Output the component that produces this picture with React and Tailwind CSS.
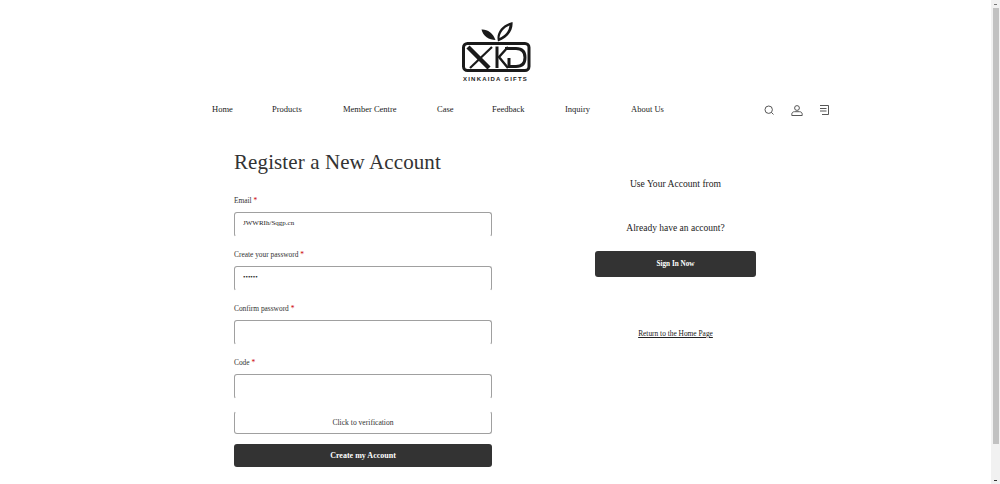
const navItems = [
  { label: 'Home', w: 'w-[20px]' },
  { label: 'Products', w: 'w-[31px]' },
  { label: 'Member Centre', w: 'w-[54px]' },
  { label: 'Case', w: 'w-[15px]' },
  { label: 'Feedback', w: 'w-[33px]' },
  { label: 'Inquiry', w: 'w-[26px]' },
  { label: 'About Us', w: 'w-[33px]' },
];

const fields = [
  { label: 'Email', value: 'JWWRIh/Sqgp.cn' },
  { label: 'Create your password', value: '••••••' },
  { label: 'Confirm password', value: '' },
  { label: 'Code', value: '' },
];

function Logo() {
  return (
    <svg width="70" height="50" viewBox="0 0 70 50" fill="none">
      {/* leaves */}
      <path d="M20.5 7.5 C26 7 32 11 34.5 18 C28 18 22 14 20.5 7.5 Z" fill="#1a1a1a" />
      <path d="M51.5 0 C52.5 8 47 16 37 19.5 C34.5 11 41 2.5 51.5 0 Z M48.5 3.5 C43 5.5 39 10.5 38.5 16 C44 13.5 48 9 48.5 3.5 Z" fill="#1a1a1a" fillRule="evenodd" />
      {/* frame */}
      <rect x="2.5" y="21.5" width="65.5" height="27" rx="4" stroke="#1a1a1a" strokeWidth="3" />
      {/* XKD mark */}
      <path d="M7 25 L28 46" stroke="#1a1a1a" strokeWidth="4.5" />
      <path d="M31 25 L9 46" stroke="#1a1a1a" strokeWidth="2.2" />
      <path d="M36 24.5 V46" stroke="#1a1a1a" strokeWidth="3" />
      <path d="M47 25 L38 35 L47 46" stroke="#1a1a1a" strokeWidth="2.4" />
      <path d="M44 26.5 H55 C61 26.5 64 30 64 35.5 C64 41 61 44.5 55 44.5 H48 V36" stroke="#1a1a1a" strokeWidth="3" />
    </svg>
  );
}

function Icons() {
  return (
    <div className="flex items-center gap-[17px] mt-[2px] text-[#444]">
      <svg width="10" height="10" viewBox="0 0 10 10" fill="none" stroke="currentColor" strokeWidth="0.9">
        <circle cx="4.7" cy="4.7" r="3.7" />
        <path d="M7.5 7.5 L9.5 9.5" />
      </svg>
      <svg width="12" height="11" viewBox="0 0 12 11" fill="none" stroke="currentColor" strokeWidth="0.9">
        <circle cx="6" cy="3" r="2.4" />
        <path d="M0.8 10.5 V9.2 C0.8 7.6 2 6.7 3.5 6.7 H8.5 C10 6.7 11.2 7.6 11.2 9.2 V10.5 Z" />
      </svg>
      <svg width="9" height="10" viewBox="0 0 9 10" fill="none" stroke="currentColor" strokeWidth="0.9">
        <path d="M0 0.5 H8.5 V9.5 H2" />
        <path d="M0 3.5 H6.5 M0 6 H6.5" />
      </svg>
    </div>
  );
}

function Field({ label, value }) {
  return (
    <div className="mb-[13px]">
      <div className="h-[16px] text-[7.4px] leading-[9px] text-[#333]">
        {label} <span className="text-[#c00]">*</span>
      </div>
      <input
        readOnly
        value={value}
        className="block w-full h-[25px] px-[8px] pb-[3px] text-[7px] text-[#222] rounded-[3px] border border-[#a0a0a0] border-b-white outline-none"
      />
    </div>
  );
}

export default function App() {
  return (
    <div className="flex h-[484px] overflow-hidden bg-white font-['Liberation_Serif',serif]">
      <div className="flex-1 min-w-0">
        <div className="flex flex-col items-center pt-[22px]">
          <Logo />
          <div className="mt-[3px] text-[6px] leading-[8px] tracking-[1.2px] font-bold text-[#222] font-['Liberation_Sans',sans-serif]">
            XINKAIDA GIFTS
          </div>
        </div>

        <div className="flex items-center justify-between mt-[18px] ml-[212px] mr-[162px] h-[16px]">
          <nav className="flex gap-[40px] text-[8.5px] leading-[12px] text-[#222]">
            {navItems.map(n => (
              <span key={n.label} className={`${n.w} whitespace-nowrap`}>{n.label}</span>
            ))}
          </nav>
          <Icons />
        </div>

        <div className="flex mt-[31px] ml-[234px]">
          <div className="w-[258px]">
            <h1 className="h-[48px] text-[21px] leading-[28px] tracking-[0.1px] text-[#333]">Register a New Account</h1>
            {fields.map(f => <Field key={f.label} label={f.label} value={f.value} />)}
            <button className="block w-full h-[23px] mt-[-1px] text-[7.6px] text-[#333] rounded-[3px] border border-[#a0a0a0] border-t-white">
              Click to verification
            </button>
            <button className="block w-full h-[23px] mt-[10px] text-[8px] font-bold text-white bg-[#333] rounded-[3px]">
              Create my Account
            </button>
          </div>

          <div className="w-[161px] ml-[103px] pt-[29px] flex flex-col items-center text-center text-[#222]">
            <div className="text-[9.6px] leading-[14px]">Use Your Account from</div>
            <div className="mt-[30px] text-[9.5px] leading-[14px]">Already have an account?</div>
            <button className="w-full h-[26px] mt-[16px] text-[7.2px] font-bold text-white bg-[#333] rounded-[3px]">
              Sign In Now
            </button>
            <a className="mt-[52px] text-[7.4px] leading-[10px] underline text-[#222]">Return to the Home Page</a>
          </div>
        </div>
      </div>

      <div className="w-[9px] shrink-0 flex flex-col items-center bg-[#f1f1f1]">
        <div className="h-[8px] w-full flex items-center justify-center">
          <div className="w-[3px] h-[1px] bg-[#777]" />
        </div>
        <div className="w-[6px] h-[436px] bg-[#c1c1c1]" />
        <div className="mt-auto h-[8px] w-full flex items-center justify-center">
          <div className="w-[3px] h-[1px] bg-[#333]" />
        </div>
      </div>
    </div>
  );
}
